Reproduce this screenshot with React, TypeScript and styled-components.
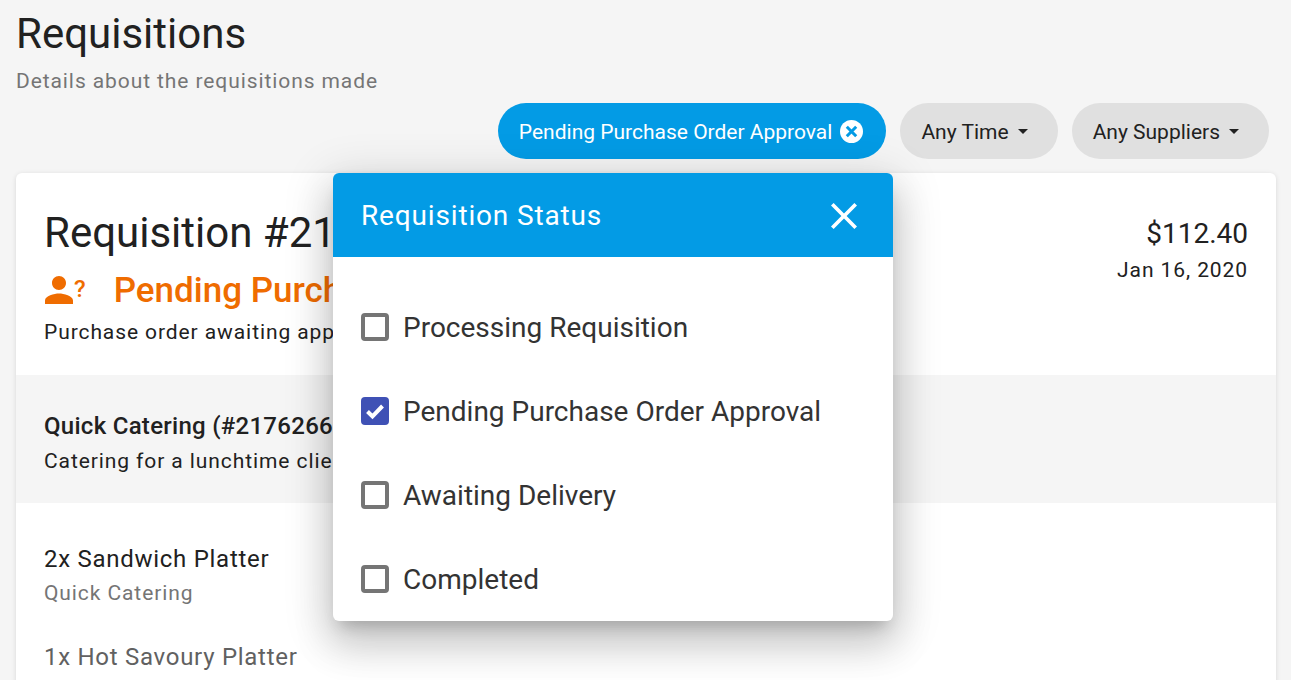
import React from "react";
import styled, { createGlobalStyle } from "styled-components";

const GlobalStyle = createGlobalStyle`
  html, body {
    margin: 0;
    height: 100%;
    overflow: hidden;
    background-color: #f5f5f5;
    font-family: Roboto, "Liberation Sans", sans-serif;
  }
`;

const Page = styled.div`
  height: 680px;
  overflow: hidden;
  box-sizing: border-box;
  padding: 9px 15px 0 16px;
`;

const Title = styled.h1`
  margin: 0;
  font-size: 42px;
  line-height: 50px;
  font-weight: 400;
  color: #212121;
`;

const Subtitle = styled.p`
  margin: 8px 0 0;
  font-size: 21px;
  line-height: 28px;
  letter-spacing: 0.91px;
  color: #757575;
`;

const FilterBar = styled.div`
  display: flex;
  justify-content: flex-end;
  gap: 14px;
  margin: 8px 7px 14px 0;
`;

const Chip = styled.button<{ $active?: boolean }>`
  display: flex;
  align-items: center;
  height: 56px;
  padding: 2px 23px 0 21px;
  border: 0;
  border-radius: 28px;
  font-family: inherit;
  font-size: 21px;
  background-color: ${(p) => (p.$active ? "#039be5" : "#e0e0e0")};
  color: ${(p) => (p.$active ? "#fff" : "#212121")};
`;

const ChipClear = styled.svg`
  width: 23px;
  height: 23px;
  margin: -2px 0 0 8px;
`;

const Caret = styled.svg`
  width: 24px;
  height: 24px;
  margin: -2px 0 0 2px;
  fill: #212121;
`;

const Card = styled.div`
  min-height: 530px;
  background-color: #fff;
  border-radius: 6px 6px 0 0;
  box-shadow: 0 1px 5px rgba(0, 0, 0, 0.12);
`;

const CardHead = styled.div`
  display: flex;
  justify-content: space-between;
  height: 202px;
  box-sizing: border-box;
  padding: 33px 28px 0;
`;

const ReqTitle = styled.div`
  font-size: 42px;
  line-height: 54px;
  color: #212121;
`;

const StatusRow = styled.div`
  display: flex;
  align-items: center;
  gap: 28px;
  height: 50px;
  margin-top: 5px;
  font-size: 35px;
  font-weight: 500;
  color: #ef6c00;
`;

const StatusIcon = styled.span`
  display: flex;
  align-items: center;
  margin-left: 1px;
`;

const PersonIcon = styled.svg`
  width: 28px;
  height: 28px;
  fill: #ef6c00;
`;

const QuestionMark = styled.span`
  font-size: 24px;
  font-weight: 500;
  line-height: 20px;
  margin: -3px 0 0 1px;
`;

const StatusNote = styled.div`
  font-size: 21px;
  line-height: 28px;
  letter-spacing: 0.91px;
  margin-top: 3px;
  color: #212121;
`;

const Amount = styled.div`
  text-align: right;
  padding-top: 10px;
  font-size: 28px;
  line-height: 36px;
  color: #212121;
`;

const AmountDate = styled.div`
  font-size: 21px;
  line-height: 28px;
  letter-spacing: 0.91px;
  margin-top: 4px;
`;

const SupplierBand = styled.div`
  height: 128px;
  box-sizing: border-box;
  padding: 35px 28px 0;
  background-color: #f5f5f5;
`;

const SupplierName = styled.div`
  font-size: 24px;
  line-height: 32px;
  letter-spacing: 0.28px;
  font-weight: 500;
  color: #212121;
`;

const SupplierNote = styled.div`
  font-size: 21px;
  line-height: 28px;
  letter-spacing: 0.91px;
  margin-top: 5px;
  color: #212121;
`;

const Items = styled.div`
  padding: 40px 28px 0;
`;

const Item = styled.div<{ $muted?: boolean }>`
  margin-bottom: 34px;
  color: ${(p) => (p.$muted ? "#616161" : "#212121")};
`;

const ItemName = styled.div`
  font-size: 24px;
  line-height: 32px;
  letter-spacing: 0.72px;
`;

const ItemSupplier = styled.div`
  font-size: 21px;
  line-height: 28px;
  letter-spacing: 0.91px;
  margin-top: 4px;
  color: #757575;
`;

const Modal = styled.div`
  position: absolute;
  left: 333px;
  top: 173px;
  width: 560px;
  height: 448px;
  background-color: #fff;
  border-radius: 6px;
  overflow: hidden;
  box-shadow: 0 11px 15px -7px rgba(0, 0, 0, 0.2), 0 24px 38px 3px rgba(0, 0, 0, 0.14),
    0 9px 46px 8px rgba(0, 0, 0, 0.12);
`;

const ModalHead = styled.div`
  display: flex;
  align-items: center;
  justify-content: space-between;
  height: 84px;
  padding: 0 36px 0 28px;
  background-color: #039be5;
  color: #fff;
  font-size: 28px;
  letter-spacing: 0.84px;
`;

const CloseIcon = styled.svg`
  width: 26px;
  height: 26px;
  margin-top: 2px;
  fill: #fff;
`;

const OptionList = styled.div`
  padding-top: 28px;
`;

const Option = styled.label`
  display: flex;
  align-items: center;
  gap: 14px;
  height: 84px;
  padding-left: 28px;
  font-size: 28px;
  color: #333;
`;

const Box = styled.svg`
  width: 28px;
  height: 28px;
`;

const statuses = [
  { label: "Processing Requisition", checked: false },
  { label: "Pending Purchase Order Approval", checked: true },
  { label: "Awaiting Delivery", checked: false },
  { label: "Completed", checked: false },
];

const App = () => {
  return (
    <Page>
      <GlobalStyle />
      <Title>Requisitions</Title>
      <Subtitle>Details about the requisitions made</Subtitle>

      <FilterBar>
        <Chip $active>
          Pending Purchase Order Approval
          <ChipClear viewBox="0 0 23 23">
            <circle cx="11.5" cy="11.5" r="11.5" fill="#fff" />
            <path d="M6.8 6.8l9.4 9.4M16.2 6.8l-9.4 9.4" stroke="#039be5" strokeWidth="3" fill="none" />
          </ChipClear>
        </Chip>
        <Chip>
          Any Time
          <Caret viewBox="0 0 24 24">
            <path d="M7 10l5 5 5-5z" />
          </Caret>
        </Chip>
        <Chip>
          Any Suppliers
          <Caret viewBox="0 0 24 24">
            <path d="M7 10l5 5 5-5z" />
          </Caret>
        </Chip>
      </FilterBar>

      <Card>
        <CardHead>
          <div>
            <ReqTitle>Requisition #2176266</ReqTitle>
            <StatusRow>
              <StatusIcon>
                <PersonIcon viewBox="4 4 16 16">
                  <path d="M12 12c2.21 0 4-1.79 4-4s-1.79-4-4-4-4 1.79-4 4 1.79 4 4 4zm0 2c-2.67 0-8 1.34-8 4v2h16v-2c0-2.66-5.33-4-8-4z" />
                </PersonIcon>
                <QuestionMark>?</QuestionMark>
              </StatusIcon>
              Pending Purchase Order Approval
            </StatusRow>
            <StatusNote>Purchase order awaiting approval</StatusNote>
          </div>
          <Amount>
            $112.40
            <AmountDate>Jan 16, 2020</AmountDate>
          </Amount>
        </CardHead>

        <SupplierBand>
          <SupplierName>Quick Catering (#2176266)</SupplierName>
          <SupplierNote>Catering for a lunchtime client meeting</SupplierNote>
        </SupplierBand>

        <Items>
          <Item>
            <ItemName>2x Sandwich Platter</ItemName>
            <ItemSupplier>Quick Catering</ItemSupplier>
          </Item>
          <Item $muted>
            <ItemName>1x Hot Savoury Platter</ItemName>
          </Item>
        </Items>
      </Card>

      <Modal>
        <ModalHead>
          Requisition Status
          <CloseIcon viewBox="5 5 14 14">
            <path d="M19 6.41L17.59 5 12 10.59 6.41 5 5 6.41 10.59 12 5 17.59 6.41 19 12 13.41 17.59 19 19 17.59 13.41 12 19 6.41z" />
          </CloseIcon>
        </ModalHead>
        <OptionList>
          {statuses.map((status) => (
            <Option key={status.label}>
              <Box viewBox="0 0 28 28">
                {status.checked ? (
                  <>
                    <rect width="28" height="28" rx="4" fill="#3f51b5" />
                    <path d="M6.5 14.5l5 5 10-10.5" stroke="#fff" strokeWidth="4" fill="none" />
                  </>
                ) : (
                  <rect x="2" y="2" width="24" height="24" rx="2" fill="none" stroke="#757575" strokeWidth="4" />
                )}
              </Box>
              {status.label}
            </Option>
          ))}
        </OptionList>
      </Modal>
    </Page>
  );
};

export default App;
